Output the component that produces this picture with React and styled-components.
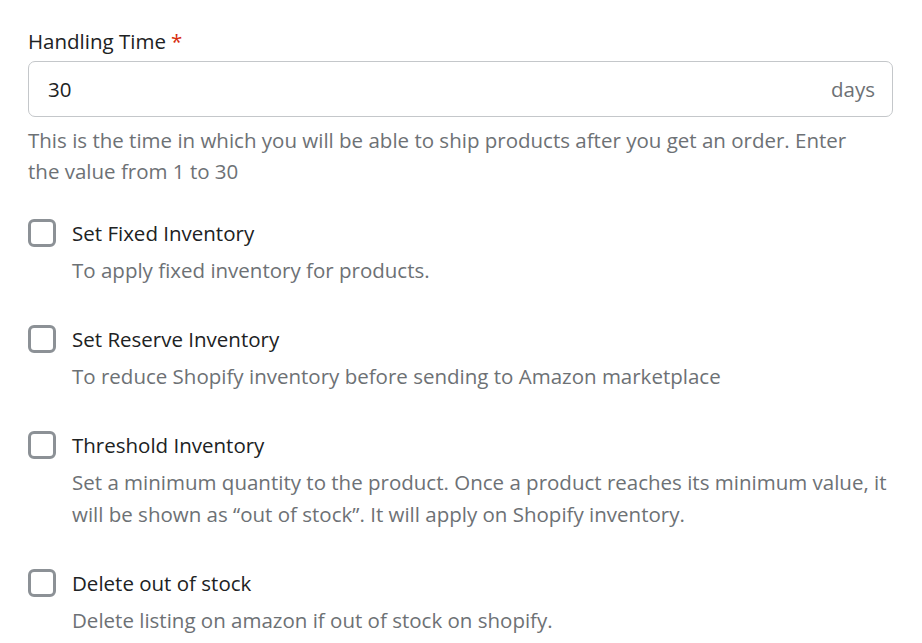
import React from "react";
import styled, { createGlobalStyle } from "styled-components";

const Global = createGlobalStyle`
  html, body { margin: 0; padding: 0; background: #ffffff; }
  body { font-family: "Open Sans", "Noto Sans", sans-serif; }
  * { box-sizing: border-box; }
`;

const Page = styled.div`
  padding: 25px 29px 0 28px;
  display: flex;
  flex-direction: column;
  font-size: 20.5px;
`;

const Label = styled.div`
  line-height: 32px;
  color: #202223;
  margin-bottom: 4px;
`;

const Required = styled.span`
  color: #d72c0d;
  margin-left: 5px;
`;

const InputBox = styled.div`
  height: 56px;
  border: 1px solid #c4c7ca;
  border-radius: 7px;
  display: flex;
  align-items: center;
  justify-content: space-between;
  padding: 0 17px 0 19px;
  color: #202223;
`;

const Suffix = styled.span`
  color: #6d7175;
`;

const Help = styled.p`
  margin: 8px 0 0;
  max-width: 835px;
  line-height: 31px;
  color: #6d7175;
`;

const Options = styled.div`
  display: flex;
  flex-direction: column;
  gap: 37px;
  margin-top: 30px;
`;

const Option = styled.div`
  display: grid;
  grid-template-columns: 28px 1fr;
  column-gap: 16px;
  row-gap: 5px;
`;

const Box = styled.span`
  width: 28px;
  height: 28px;
  border: 3px solid #8c9196;
  border-radius: 6px;
  align-self: center;
`;

const Title = styled.div`
  line-height: 32px;
  color: #202223;
`;

const Desc = styled.div`
  grid-column: 2;
  line-height: 32px;
  color: #6d7175;
`;

const options = [
  { title: "Set Fixed Inventory", desc: "To apply fixed inventory for products." },
  { title: "Set Reserve Inventory", desc: "To reduce Shopify inventory before sending to Amazon marketplace" },
  {
    title: "Threshold Inventory",
    desc: "Set a minimum quantity to the product. Once a product reaches its minimum value, it will be shown as \u201cout of stock\u201d. It will apply on Shopify inventory.",
  },
  { title: "Delete out of stock", desc: "Delete listing on amazon if out of stock on shopify." },
];

export default function App() {
  return (
    <>
      <Global />
      <Page>
        <Label>
          Handling Time<Required>*</Required>
        </Label>
        <InputBox>
          <span>30</span>
          <Suffix>days</Suffix>
        </InputBox>
        <Help>
          This is the time in which you will be able to ship products after you get an order. Enter the value from 1 to 30
        </Help>
        <Options>
          {options.map((o) => (
            <Option key={o.title}>
              <Box />
              <Title>{o.title}</Title>
              <Desc>{o.desc}</Desc>
            </Option>
          ))}
        </Options>
      </Page>
    </>
  );
}
